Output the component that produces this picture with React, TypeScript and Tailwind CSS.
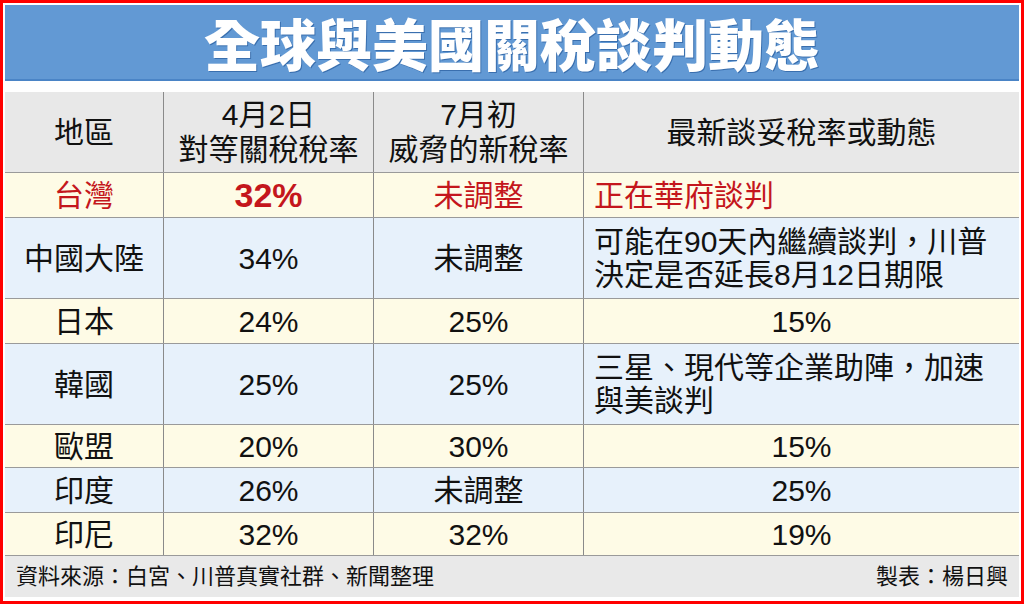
import React from "react";

type Row = {
  region: string;
  apr: string;
  jul: string;
  latest: string[];
  h: string;
  bg: string;
  left?: boolean;
  red?: boolean;
};

const rows: Row[] = [
  { region: "台灣", apr: "32%", jul: "未調整", latest: ["正在華府談判"], h: "h-[45px]", bg: "bg-[#fefbe6]", left: true, red: true },
  { region: "中國大陸", apr: "34%", jul: "未調整", latest: ["可能在90天內繼續談判，川普", "決定是否延長8月12日期限"], h: "h-[81px]", bg: "bg-[#e7f1fb]", left: true },
  { region: "日本", apr: "24%", jul: "25%", latest: ["15%"], h: "h-[45px]", bg: "bg-[#fefbe6]" },
  { region: "韓國", apr: "25%", jul: "25%", latest: ["三星、現代等企業助陣，加速", "與美談判"], h: "h-[81px]", bg: "bg-[#e7f1fb]", left: true },
  { region: "歐盟", apr: "20%", jul: "30%", latest: ["15%"], h: "h-[43px]", bg: "bg-[#fefbe6]" },
  { region: "印度", apr: "26%", jul: "未調整", latest: ["25%"], h: "h-[45px]", bg: "bg-[#e7f1fb]" },
  { region: "印尼", apr: "32%", jul: "32%", latest: ["19%"], h: "h-[43px]", bg: "bg-[#fefbe6]" },
];

const font = { fontFamily: '"Liberation Sans", "Noto Sans CJK TC", sans-serif' };

export default function App() {
  return (
    <div
      className="w-[1024px] h-[604px] border-[3px] border-[#ff0000] bg-white p-[2px] flex flex-col text-[#111]"
      style={font}
    >
      {/* Title */}
      <div className="h-[76px] bg-[#6299d4] border-b-2 border-[#4a84c6] flex items-center justify-center">
        <h1
          className="text-white text-[56px] font-black leading-none [text-shadow:1px_1px_0_#3a6fae]"
          style={{ fontFamily: '"Noto Sans CJK TC", sans-serif' }}
        >
          全球與美國關稅談判動態
        </h1>
      </div>

      <div className="mt-[11px] flex flex-col">
        {/* Header */}
        <div className="flex h-[81px] bg-[#e8e8e8] border-b border-[#9a9a9a] text-[30px] leading-[35px]">
          <div className="w-[159px] border-r border-[#8a8a8a] flex items-center justify-center">地區</div>
          <div className="w-[210px] border-r border-[#8a8a8a] flex flex-col items-center justify-center">
            <span>4月2日</span>
            <span>對等關稅稅率</span>
          </div>
          <div className="w-[210px] border-r border-[#8a8a8a] flex flex-col items-center justify-center">
            <span>7月初</span>
            <span>威脅的新稅率</span>
          </div>
          <div className="flex-1 flex items-center justify-center">最新談妥稅率或動態</div>
        </div>

        {rows.map((r) => (
          <div key={r.region} className={`flex ${r.h} ${r.bg} border-b border-[#9a9a9a] text-[30px] leading-[33px]`}>
            <div className={`w-[159px] border-r border-[#8a8a8a] flex items-center justify-center ${r.red ? "text-[#c4161c]" : ""}`}>
              {r.region}
            </div>
            <div className={`w-[210px] border-r border-[#8a8a8a] flex items-center justify-center ${r.red ? "text-[#c4161c] font-black text-[34px]" : ""}`}>
              {r.apr}
            </div>
            <div className={`w-[210px] border-r border-[#8a8a8a] flex items-center justify-center ${r.red ? "text-[#c4161c]" : ""}`}>
              {r.jul}
            </div>
            <div className={`flex-1 flex flex-col justify-center ${r.left ? "items-start pl-[10px]" : "items-center"} ${r.red ? "text-[#c4161c]" : ""}`}>
              {r.latest.map((l) => (
                <span key={l}>{l}</span>
              ))}
            </div>
          </div>
        ))}

        {/* Footer */}
        <div className="h-[41px] bg-[#e9e9e9] flex items-center justify-between px-[11px] text-[22px]">
          <span>資料來源：白宮、川普真實社群、新聞整理</span>
          <span>製表：楊日興</span>
        </div>
      </div>
    </div>
  );
}
